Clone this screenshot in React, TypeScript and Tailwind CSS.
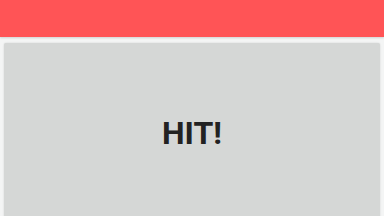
export default function App() {
  return (
    <div className="w-[384px] h-[216px] overflow-hidden bg-[#f4f5f5] flex flex-col" style={{ fontFamily: "Roboto, 'Noto Sans', sans-serif" }}>
      <div className="h-[37px] shrink-0 bg-[#ff5456] shadow-[0_1px_2px_rgba(0,0,0,0.15)]" />
      <div className="flex-1 px-[4px] pt-[6px]">
        <div className="h-[200px] bg-[#d5d7d6] rounded-t-[2px] shadow-[0_0_2px_rgba(0,0,0,0.15)] flex justify-center pt-[70px]">
          <span className="text-[32px] leading-[40px] font-bold text-[#222]">HIT!</span>
        </div>
      </div>
    </div>
  );
}
